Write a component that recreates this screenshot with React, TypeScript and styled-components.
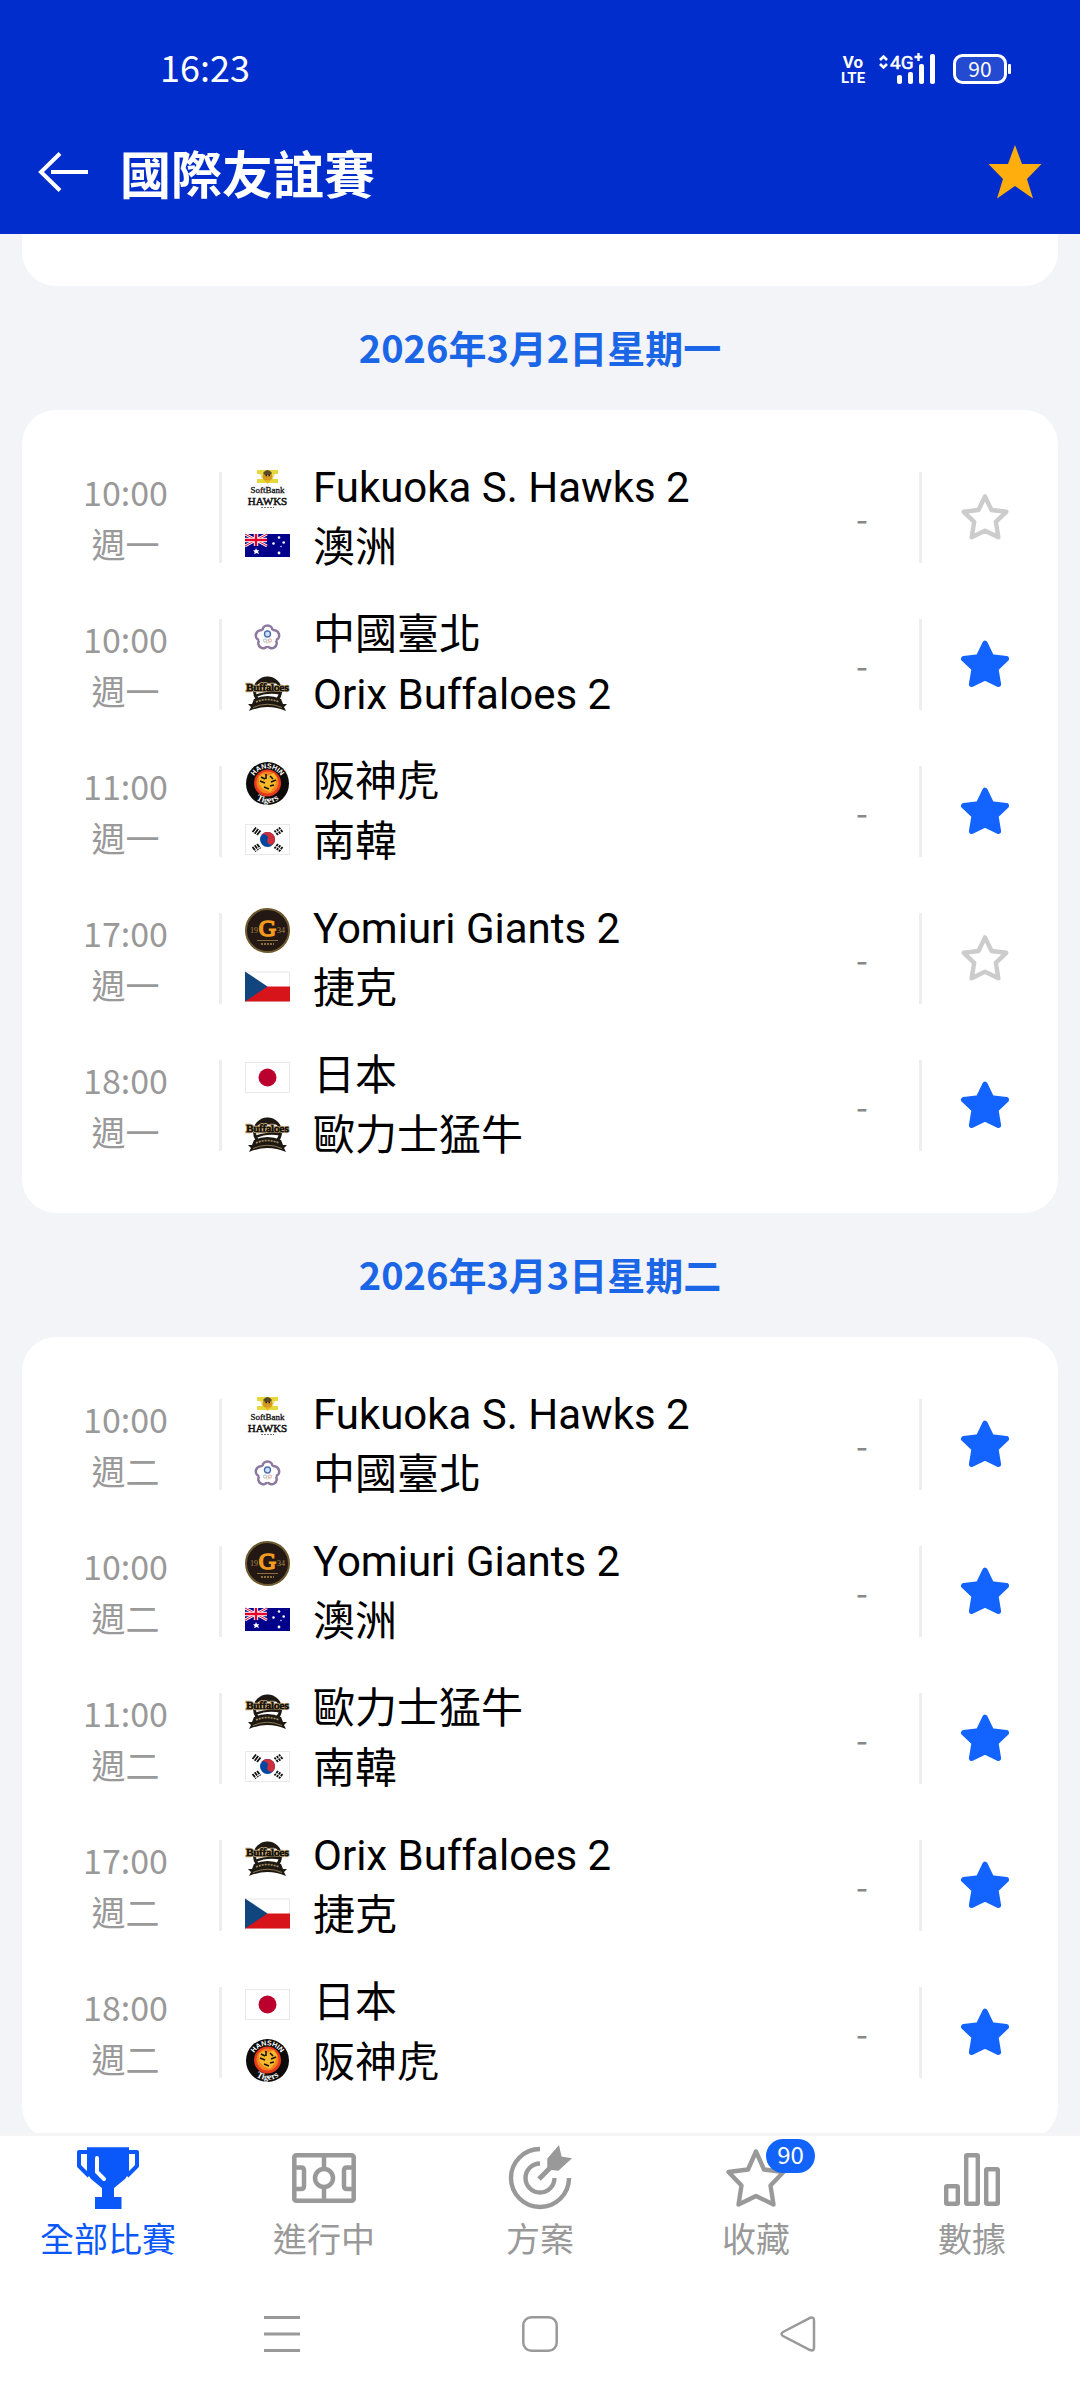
import React, { useState } from 'react';
import styled, { createGlobalStyle } from 'styled-components';

const cjk = `"Noto Sans CJK TC", "Noto Sans", sans-serif`;
const latin = `Roboto, "Noto Sans CJK TC", sans-serif`;

const GlobalStyle = createGlobalStyle`
  *, *::before, *::after { box-sizing: border-box; }
  body { margin: 0; background: #f2f4f8; font-family: ${cjk}; }
  h1, h2, p, ul { margin: 0; padding: 0; }
  ul { list-style: none; }
  svg { display: block; flex: none; overflow: visible; }
`;

const Screen = styled.div`
  display: flex;
  flex-direction: column;
  height: 100vh;
  overflow: hidden;
`;

const Header = styled.header`
  flex: none;
  background: #002dcb;
  color: #fff;
`;

const StatusBar = styled.div`
  display: flex;
  align-items: center;
  justify-content: space-between;
  height: 114px;
  padding: 24px 68px 0 160px;
`;

const Clock = styled.span`
  padding-bottom: 6px;
  font-size: 36px;
  line-height: 40px;
`;

const StatusIcons = styled.div`
  display: flex;
  align-items: center;
`;

const AppBar = styled.div`
  display: flex;
  align-items: center;
  gap: 28px;
  height: 120px;
  padding: 0 38px 4px 36px;
`;

const IconButton = styled.button`
  display: flex;
  align-items: center;
  justify-content: center;
  padding: 0;
  border: 0;
  background: none;
  cursor: pointer;
`;

const Title = styled.h1`
  flex: 1;
  font-size: 51px;
  font-weight: 700;
  line-height: 60px;
`;

const Feed = styled.main`
  flex: 1;
  min-height: 0;
  overflow: hidden;
  padding: 0 22px;
`;

const Card = styled.ul`
  padding: 34px 10px;
  border-radius: 34px;
  background: #fff;
`;

const CardEnd = styled.div`
  height: 52px;
  border-radius: 0 0 34px 34px;
  background: #fff;
`;

const DayTitle = styled.h2`
  display: flex;
  align-items: center;
  justify-content: center;
  height: 124px;
  padding-bottom: 3px;
  color: #1b66e6;
  font-size: 38px;
  font-weight: 700;
`;

const Match = styled.li`
  display: flex;
  align-items: center;
  height: 147px;
`;

const Kickoff = styled.div`
  width: 187px;
  color: #999;
  font-size: 34px;
  line-height: 52px;
  text-align: center;
`;

const Divider = styled.span`
  width: 3px;
  height: 91px;
  background: #eee;
`;

const Logos = styled.div`
  display: flex;
  flex-direction: column;
  gap: 11px;
  margin: 0 23px;
`;

const Names = styled.div`
  flex: 1;
  color: #000;
  font-family: ${latin};
  font-size: 42px;
  line-height: 60px;
`;

const Score = styled.span`
  width: 114px;
  color: #888;
  font-size: 34px;
  line-height: 40px;
  text-align: center;
`;

const FavouriteCell = styled.div`
  display: flex;
  justify-content: center;
  width: 126px;
  padding-bottom: 2px;
`;

const TabBar = styled.nav`
  flex: none;
  display: grid;
  grid-template-columns: repeat(5, 1fr);
  height: 135px;
  padding-top: 10px;
  border-top: 3px solid #f5f5f6;
  background: #fff;
`;

const Tab = styled.a<{ $active?: boolean }>`
  display: flex;
  flex-direction: column;
  align-items: center;
  gap: 8px;
  color: ${(p) => (p.$active ? '#0a57fa' : '#999')};
  font-size: 34px;
  line-height: 40px;
  text-decoration: none;
`;

const TabIcon = styled.span`
  position: relative;
`;

const Badge = styled.span`
  position: absolute;
  top: -7px;
  left: 42px;
  width: 49px;
  height: 34px;
  border-radius: 17px;
  background: #1263fa;
  color: #fff;
  font-size: 24px;
  line-height: 30px;
  text-align: center;
`;

const SystemBar = styled.div`
  flex: none;
  display: grid;
  grid-template-columns: repeat(3, 258px);
  justify-content: center;
  height: 132px;
  background: #fff;
  color: #999;
`;

type TeamId = 'hawks' | 'australia' | 'taipei' | 'buffaloes' | 'hanshin' | 'korea' | 'giants' | 'czech' | 'japan';

const FivePetals = () => (
  <>
    <g fill="#fff" stroke="#8d789f" strokeWidth="2.6">
      {[0, 72, 144, 216, 288].map((a) => (
        <circle key={a} cx="22.5" cy="16.5" r="5" transform={`rotate(${a} 22.5 23.5)`} />
      ))}
    </g>
    <circle cx="22.5" cy="23.5" r="8.6" fill="#fff" />
    <circle cx="22.5" cy="20" r="3" fill="#c9e2ff" stroke="#4e6fae" strokeWidth="1.4" />
    <g fill="none" strokeWidth="1">
      <circle cx="20" cy="26.5" r="1.6" stroke="#9fc4dc" />
      <circle cx="22.5" cy="27.5" r="1.6" stroke="#dcc69a" />
      <circle cx="25" cy="26.5" r="1.6" stroke="#dcaaaa" />
    </g>
  </>
);

const logos: Record<TeamId, React.ReactNode> = {
  hawks: (
    <>
      <path d="M12 3H33V7H12ZM12 12H33V16H12Z" fill="#e6d83a" />
      <path d="M15 7H30L28 12H17Z" fill="#efe27a" />
      <circle cx="22.5" cy="9.5" r="5" fill="#d39a1f" />
      <path d="M18 6Q22.5 0 27 6L25 8H20Z" fill="#5a4a2a" />
      <path d="M20.5 8.5H22M23.5 8.5H25" stroke="#221c10" strokeWidth="1.5" />
      <path d="M20 13L22.5 17L25 13Z" fill="#e8b21d" />
      <text x="22.5" y="26" textAnchor="middle" fontFamily="Liberation Serif, serif" fontSize="9" fill="#111" stroke="#111" strokeWidth="0.3">SoftBank</text>
      <text x="22.5" y="37.500" textAnchor="middle" fontFamily="Liberation Serif, serif" fontSize="11" fill="#111" stroke="#111" strokeWidth="0.5">HAWKS</text>
      <path d="M16 40.500H29" stroke="#777" strokeWidth="1" strokeDasharray="2 1" />
    </>
  ),
  australia: (
    <>
      <path d="M0 11H45V34H0Z" fill="#00008b" />
      <path d="M0 11L22 23M22 11L0 23" stroke="#fff" strokeWidth="2.6" />
      <path d="M0 11L22 23M22 11L0 23" stroke="#e4002b" strokeWidth="1" />
      <path d="M11 11V23M0 17H22" stroke="#fff" strokeWidth="4.4" />
      <path d="M11 11V23M0 17H22" stroke="#e4002b" strokeWidth="2.4" />
      <g fill="#fff">
        <path d="M11 25L12 27.2L14.2 27L13 28.8L14 31L11.5 30L9.3 31.2L9.6 28.9L8 27.3L10.2 27.2Z" />
        <circle cx="34" cy="14.5" r="1.3" />
        <circle cx="28.5" cy="20.5" r="1.3" />
        <circle cx="38.7" cy="19.5" r="1.3" />
        <circle cx="34" cy="30" r="1.4" />
        <circle cx="36" cy="23.5" r="0.7" />
      </g>
    </>
  ),
  taipei: <FivePetals />,
  buffaloes: (
    <>
      <circle cx="22.5" cy="21" r="13" fill="#fff" stroke="#1d1811" strokeWidth="3" />
      <path d="M11 13.500Q22.5 0 34 13.500Z" fill="#1d1811" />
      <text x="22.5" y="20.500" textAnchor="middle" fontFamily="Liberation Serif, serif" fontSize="11" fill="#18130c" stroke="#b39a6b" strokeWidth="2.400" paintOrder="stroke">Buffaloes</text>
      <text x="22.5" y="20.500" textAnchor="middle" fontFamily="Liberation Serif, serif" fontSize="11" fill="#18130c" stroke="#18130c" strokeWidth="0.700" aria-hidden="true">Buffaloes</text>
      <path d="M9 25Q22 20 37 22L35 24.500Q22 22 11 27Z" fill="#1d1811" />
      <path d="M9 29Q22.5 23 36 29L38 34H42L39 37L41 41Q22.5 33 4 41L6 37L3 34H7Z" fill="#1d1811" />
      <path d="M11 32Q22.5 27 34 32" fill="none" stroke="#a78f63" strokeWidth="1.6" strokeDasharray="2 1" />
      <path d="M8 37.500Q22.500 31 37 37.500" fill="none" stroke="#8d7850" strokeWidth="1" />
    </>
  ),
  hanshin: (
    <>
      <circle cx="22.5" cy="22.5" r="21.5" fill="#0c0a0a" />
      <circle cx="22.5" cy="22" r="13.5" fill="#e63a1c" />
      <circle cx="22.5" cy="21.5" r="11" fill="#f4801f" />
      <path d="M14 16L18 13L22 15L29 12L32 17L30 25L25 31L18 28L14 23Z" fill="#f7b92b" />
      <path d="M16 16L20 18M15 20L20 22M25 15L28 18M31 19L26 21M19 26L24 28M21 13V18M29 24L25 25" stroke="#15110c" strokeWidth="1.600" />
      <path id="tigers-top" d="M7 23A15.5 15.5 0 0 1 38 23" fill="none" />
      <path id="tigers-bottom" d="M3.5 23A19 19 0 0 0 41.5 23" fill="none" />
      <text fontFamily="Liberation Sans, sans-serif" fontWeight="700" fontSize="7" fill="#fff" textAnchor="middle">
        <textPath href="#tigers-top" startOffset="50%">HANSHIN</textPath>
      </text>
      <text fontFamily="Liberation Serif, serif" fontWeight="700" fontSize="9" fill="#fff" textAnchor="middle">
        <textPath href="#tigers-bottom" startOffset="50%">Tigers</textPath>
      </text>
    </>
  ),
  korea: (
    <>
      <rect x="0.5" y="7.5" width="44" height="30" fill="#fff" stroke="#e8e8e8" />
      <circle cx="22.5" cy="22.5" r="7.5" fill="#0047a0" />
      <path d="M15.8 19A7.5 7.5 0 0 1 29.2 26A3.8 3.8 0 0 1 22.5 22.5A3.8 3.8 0 0 0 15.8 19Z" fill="#cd2e3a" />
      <g stroke="#111" strokeWidth="1.8">
        <path d="M7.500 15L11 10.500M9.700 16.700L13.200 12M12 18L15.500 13.500" />
        <path d="M37.500 15L34 10.500M35.300 16.700L31.800 12M33 18L29.500 13.500" strokeDasharray="2.7 0.8" />
        <path d="M7.500 30L11 34.500M9.700 28.300L13.200 33M12 27L15.500 31.500" strokeDasharray="4 0.8" />
        <path d="M37.500 30L34 34.500M35.300 28.300L31.800 33M33 27L29.500 31.500" strokeDasharray="2.7 0.8" />
      </g>
    </>
  ),
  giants: (
    <>
      <circle cx="22.5" cy="22.5" r="21.5" fill="#241815" stroke="#6d5a2f" strokeWidth="2" />
      <text x="22.5" y="28" textAnchor="middle" fontFamily="Liberation Serif, serif" fontSize="24" fill="#f39a1f" stroke="#f39a1f" strokeWidth="1.600">G</text>
      <text x="9" y="25" textAnchor="middle" fontFamily="Liberation Serif, serif" fontSize="8" fill="#a98b4a">19</text>
      <text x="36" y="25" textAnchor="middle" fontFamily="Liberation Serif, serif" fontSize="8" fill="#a98b4a">34</text>
      <path d="M12 32.500H33" stroke="#8a6f38" strokeWidth="1" />
      <path d="M16 36H29" stroke="#8a6f38" strokeWidth="2" strokeDasharray="2 1" />
    </>
  ),
  czech: (
    <>
      <rect x="0.5" y="8" width="44" height="29" fill="#fff" stroke="#e8e8e8" />
      <path d="M0 22.5H45V37.5H0Z" fill="#d7141a" />
      <path d="M0 7.5L22.5 22.5L0 37.5Z" fill="#11457e" />
    </>
  ),
  japan: (
    <>
      <rect x="0.5" y="7.5" width="44" height="30" fill="#fff" stroke="#e8e8e8" />
      <circle cx="22.5" cy="22.5" r="9" fill="#bc002d" />
    </>
  ),
};

const Logo = ({ team }: { team: TeamId }) => (
  <svg width="45" height="45" viewBox="0 0 45 45" aria-hidden="true">
    {logos[team]}
  </svg>
);

const Star = ({ on }: { on: boolean }) => (
  <svg width="48" height="48" viewBox="0 0 48 48" aria-hidden="true">
    <path
      d="M24 3.4L30.5 17L45.3 18.8L34.800 28.8L37.4 44.300L24 37.800L10.6 44.300L13.200 28.8L2.7 18.8L17.5 17Z"
      fill={on ? '#1263ff' : 'none'}
      stroke={on ? '#1263ff' : '#ccc'}
      strokeWidth={on ? 5.4 : 4.4}
      strokeLinejoin="round"
    />
  </svg>
);

interface Fixture {
  time: string;
  home: [TeamId, string];
  away: [TeamId, string];
  starred: boolean;
}

const days: { title: string; weekday: string; matches: Fixture[] }[] = [
  {
    title: '2026年3月2日星期一',
    weekday: '週一',
    matches: [
      { time: '10:00', home: ['hawks', 'Fukuoka S. Hawks 2'], away: ['australia', '澳洲'], starred: false },
      { time: '10:00', home: ['taipei', '中國臺北'], away: ['buffaloes', 'Orix Buffaloes 2'], starred: true },
      { time: '11:00', home: ['hanshin', '阪神虎'], away: ['korea', '南韓'], starred: true },
      { time: '17:00', home: ['giants', 'Yomiuri Giants 2'], away: ['czech', '捷克'], starred: false },
      { time: '18:00', home: ['japan', '日本'], away: ['buffaloes', '歐力士猛牛'], starred: true },
    ],
  },
  {
    title: '2026年3月3日星期二',
    weekday: '週二',
    matches: [
      { time: '10:00', home: ['hawks', 'Fukuoka S. Hawks 2'], away: ['taipei', '中國臺北'], starred: true },
      { time: '10:00', home: ['giants', 'Yomiuri Giants 2'], away: ['australia', '澳洲'], starred: true },
      { time: '11:00', home: ['buffaloes', '歐力士猛牛'], away: ['korea', '南韓'], starred: true },
      { time: '17:00', home: ['buffaloes', 'Orix Buffaloes 2'], away: ['czech', '捷克'], starred: true },
      { time: '18:00', home: ['japan', '日本'], away: ['hanshin', '阪神虎'], starred: true },
    ],
  },
];

const MatchRow = ({ match, weekday }: { match: Fixture; weekday: string }) => {
  const [starred, setStarred] = useState(match.starred);
  return (
    <Match>
      <Kickoff>
        <p>{match.time}</p>
        <p>{weekday}</p>
      </Kickoff>
      <Divider />
      <Logos>
        <Logo team={match.home[0]} />
        <Logo team={match.away[0]} />
      </Logos>
      <Names>
        <p>{match.home[1]}</p>
        <p>{match.away[1]}</p>
      </Names>
      <Score>-</Score>
      <Divider />
      <FavouriteCell>
        <IconButton type="button" aria-label="收藏" aria-pressed={starred} onClick={() => setStarred(!starred)}>
          <Star on={starred} />
        </IconButton>
      </FavouriteCell>
    </Match>
  );
};

const StatusGlyphs = () => (
  <svg width="172" height="34" viewBox="0 0 172 34" fill="#fff" aria-label="VoLTE 4G+ 90%">
    <g fontFamily="Roboto, sans-serif">
      <text x="13" y="15.500" fontSize="17" fontWeight="700" textAnchor="middle">Vo</text>
      <text x="13" y="31" fontSize="15" fontWeight="700" textAnchor="middle">LTE</text>
      <text x="50" y="17" fontSize="19" stroke="#fff" strokeWidth="0.500">4G</text>
      <path d="M74.5 5H82.5M78.5 1V9" stroke="#fff" strokeWidth="2.400" />
      <path d="M40 8L43.5 4.5L47 8M40 12L43.5 15.5L47 12" fill="none" stroke="#fff" strokeWidth="2.6" />
      <rect x="57" y="23" width="5" height="9" rx="2" />
      <rect x="68" y="20" width="5" height="12" rx="2" />
      <rect x="79" y="12" width="5" height="20" rx="2" />
      <rect x="90" y="2" width="5" height="30" rx="2" />
      <rect x="114.5" y="3.5" width="51" height="27" rx="8" fill="rgba(255,255,255,0.14)" stroke="#fff" strokeWidth="3" />
      <rect x="168" y="12" width="3" height="10" rx="1" />
    </g>
    <text x="140" y="24.5" fontFamily="Noto Sans CJK TC, sans-serif" fontSize="21" textAnchor="middle">90</text>
  </svg>
);

const TrophyIcon = () => (
  <svg width="64" height="64" viewBox="0 0 64 64" aria-hidden="true">
    <path d="M11 1.3H53V27L49 33L38 42V51H45.5V63H19V51H26V42L15 33L11 27Z" fill="currentColor" />
    <path d="M13 6H3V20L13 30M51 6H61V20L51 30" fill="none" stroke="currentColor" strokeWidth="4" strokeLinejoin="round" />
    <path d="M21 12V26L28 33" fill="none" stroke="#fff" strokeWidth="4" strokeLinecap="round" />
  </svg>
);

const PitchIcon = () => (
  <svg width="64" height="64" viewBox="0 0 64 64" fill="none" stroke="currentColor" strokeWidth="4.5" aria-hidden="true">
    <rect x="2.3" y="9.3" width="59.4" height="45.4" rx="2" />
    <circle cx="32" cy="32" r="9" />
    <path d="M32 9V23M32 41V55M2 21.5H9Q12 21.5 12 24.5V40Q12 43 9 43H2M62 21.5H55Q52 21.5 52 24.5V40Q52 43 55 43H62" />
  </svg>
);

const TargetIcon = () => (
  <svg width="64" height="64" viewBox="0 0 64 64" fill="none" stroke="currentColor" strokeWidth="4.4" aria-hidden="true">
    <path d="M32 3A29 29 0 1 0 61 32M32 17.5A14.5 14.5 0 1 0 46.5 32" />
    <path d="M31 33L43 21" strokeWidth="5" />
    <path d="M39.3 12.5L51 -1L53.5 10.5L64 12.3L50.5 24.7L39.3 23.5Z" fill="currentColor" stroke="none" />
  </svg>
);

const NavStarIcon = () => (
  <svg width="64" height="64" viewBox="0 0 64 64" aria-hidden="true">
    <path
      d="M32 5.5L40 23.5L59.5 26L46.5 39.5L49.5 58.5L32 50L14.5 58.5L17.5 39.5L4.5 26L24 23.5Z"
      fill="none"
      stroke="currentColor"
      strokeWidth="4.4"
      strokeLinejoin="round"
    />
  </svg>
);

const ChartIcon = () => (
  <svg width="64" height="64" viewBox="0 0 64 64" fill="none" stroke="currentColor" strokeWidth="4.4" aria-hidden="true">
    <rect x="6.2" y="40.2" width="11.6" height="17.6" rx="1" />
    <rect x="26.2" y="9.2" width="11.6" height="48.6" rx="1" />
    <rect x="46.2" y="23.2" width="11.6" height="34.6" rx="1" />
  </svg>
);

const tabs = [
  { label: '全部比賽', icon: <TrophyIcon />, active: true },
  { label: '進行中', icon: <PitchIcon /> },
  { label: '方案', icon: <TargetIcon /> },
  { label: '收藏', icon: <NavStarIcon />, badge: 90 },
  { label: '數據', icon: <ChartIcon /> },
];

export default function App() {
  return (
    <>
      <GlobalStyle />
      <Screen>
        <Header>
          <StatusBar>
            <Clock>16:23</Clock>
            <StatusIcons>
              <StatusGlyphs />
            </StatusIcons>
          </StatusBar>
          <AppBar>
            <IconButton type="button" aria-label="返回">
              <svg width="56" height="56" viewBox="0 0 56 56" fill="none" stroke="#fff" strokeWidth="4" aria-hidden="true">
                <path d="M24 9.5L5 28L24 46.5M15 28H52" />
              </svg>
            </IconButton>
            <Title>國際友誼賽</Title>
            <IconButton type="button" aria-label="收藏賽事">
              <svg width="54" height="54" viewBox="0 0 54 54" aria-hidden="true">
                <path
                  d="M27 0L34 19H53.5L39 34L45 53.5L27 41L9 53.5L15 34L0.5 19H20Z"
                  fill="#ffae0d"
                />
              </svg>
            </IconButton>
          </AppBar>
        </Header>

        <Feed>
          <CardEnd />
          {days.map((day) => (
            <section key={day.title}>
              <DayTitle>{day.title}</DayTitle>
              <Card>
                {day.matches.map((match, i) => (
                  <MatchRow key={i} match={match} weekday={day.weekday} />
                ))}
              </Card>
            </section>
          ))}
        </Feed>

        <TabBar>
          {tabs.map((tab) => (
            <Tab key={tab.label} href="#" $active={tab.active} aria-current={tab.active ? 'page' : undefined}>
              <TabIcon>
                {tab.icon}
                {tab.badge && <Badge>{tab.badge}</Badge>}
              </TabIcon>
              <span>{tab.label}</span>
            </Tab>
          ))}
        </TabBar>

        <SystemBar>
          <IconButton type="button" aria-label="最近使用">
            <svg width="36" height="36" viewBox="0 0 36 36" stroke="#999" strokeWidth="3" aria-hidden="true">
              <path d="M0 1.5H36M0 18H36M0 34.5H36" />
            </svg>
          </IconButton>
          <IconButton type="button" aria-label="主畫面">
            <svg width="36" height="36" viewBox="0 0 36 36" fill="none" stroke="#999" strokeWidth="2.5" aria-hidden="true">
              <rect x="1.3" y="1.3" width="33.4" height="33.4" rx="8" />
            </svg>
          </IconButton>
          <IconButton type="button" aria-label="返回上一頁">
            <svg width="36" height="36" viewBox="0 0 36 36" fill="none" stroke="#999" strokeWidth="2.5" aria-hidden="true">
              <path d="M30 1.8Q34 0.5 34 4.5V31.5Q34 35.5 30 34L3 20Q0 18 3 16Z" />
            </svg>
          </IconButton>
        </SystemBar>
      </Screen>
    </>
  );
}
